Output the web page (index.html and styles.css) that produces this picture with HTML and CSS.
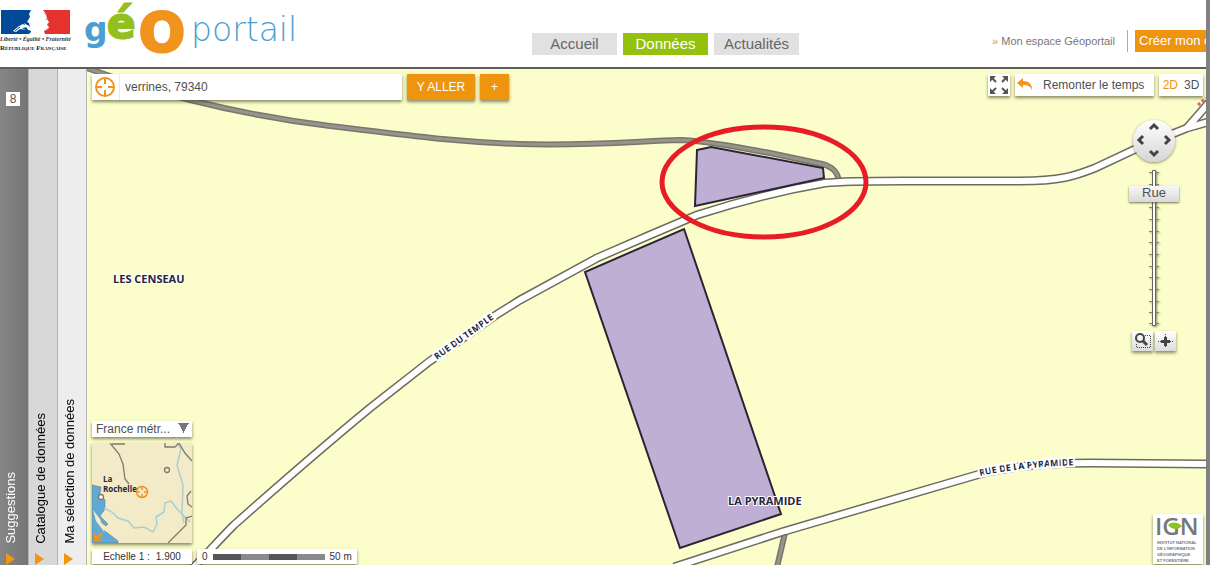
FILE: index.html
```html
<!DOCTYPE html>
<html lang="fr">
<head>
    <meta charset="UTF-8">
    <meta name="viewport" content="width=device-width, initial-scale=1.0">
    <title>Géoportail</title>
    <link rel="stylesheet" href="styles.css">
</head>
<body>
    <header class="header">
        <svg class="logo-rf" width="74" height="54" viewBox="0 0 74 54" role="img" aria-label="République Française">
            <path fill="#004a96" d="M1 10h30l-2 4 1 3-3 5 2 1 1 5 1 4-2 2H1z"/>
            <path fill="#e6322f" d="M43 10h27v24H45l-1-3 4-2 1-2-2-2 2-3-2-3-1-5z"/>
            <path fill="#fff" d="M13 31l6-5 4-2 5 3-6 1 4 2-6-1-4 3zM24 23l5 3 3 5-4-1z"/>
            <path fill="none" stroke="#004a96" d="M15 31l5-4M19 32l5-2"/>
            <path fill="none" stroke="#888" stroke-width="0.6" d="M44 13l2 2M45 19l2 1M47 24h2M46 29h2"/>
            <text class="rf-motto" x="0" y="41">Liberté • Égalité • Fraternité</text>
            <text class="rf-name" x="0" y="50">R<tspan class="rf-small">ÉPUBLIQUE</tspan> F<tspan class="rf-small">RANÇAISE</tspan></text>
        </svg>
        <svg class="logo-geo" width="218" height="66" viewBox="84 0 218 66" role="img" aria-label="Géoportail">
            <text class="geo-g" x="84" y="41">g</text>
            <text class="geo-e" x="107" y="38">é</text>
            <text class="geo-o" x="139" y="51">O</text>
            <text class="geo-portail" x="191" y="41">portail</text>
        </svg>
        <nav class="nav">
            <a href="#">Accueil</a>
            <a href="#" class="active">Données</a>
            <a href="#">Actualités</a>
        </nav>
        <div class="account">
            <a href="#" class="my-space"><span>»</span> Mon espace Géoportail</a>
            <a href="#" class="create">Créer mon espace</a>
        </div>
    </header>

    <main class="main">
        <div class="tabs">
            <button type="button" class="tab tab-dark">
                <span class="badge">8</span>
                <span class="tab-label">Suggestions</span>
                <svg width="9" height="12" viewBox="0 0 9 12"><path fill="#f0960f" d="M0 0l9 6-9 6z"/></svg>
            </button>
            <button type="button" class="tab tab-mid">
                <span class="tab-label">Catalogue de données</span>
                <svg width="9" height="12" viewBox="0 0 9 12"><path fill="#f0960f" d="M0 0l9 6-9 6z"/></svg>
            </button>
            <button type="button" class="tab tab-light">
                <span class="tab-label">Ma sélection de données</span>
                <svg width="9" height="12" viewBox="0 0 9 12"><path fill="#f0960f" d="M0 0l9 6-9 6z"/></svg>
            </button>
        </div>

        <div class="map">
            <svg class="map-canvas" viewBox="87 69 1119 496" preserveAspectRatio="xMidYMid slice">
                <defs>
                    <path id="track" d="M84 67L110 76C140 87 170 95 190 100C230 110 280 120 330 126C400 134 450 142 520 144C590 146 640 141 680 140C710 141 740 148 770 153L822 164C834 167 838 173 839 182"/>
                    <path id="track-south" d="M785 533L777 567"/>
                    <path id="temple" d="M190 571C208 553 216 543 234 525C270 493 330 441 370 408L430 361L496 315L520 300L597 258L650 235L697 215C740 201 790 189 825 183C850 180 900 181 950 181H1020C1060 181 1075 176 1095 168L1140 147L1187 128L1212 121"/>
                    <path id="branch" d="M1187 128L1213 98"/>
                    <path id="pyramide" d="M674 567L785 531L980 474C1015 465 1050 463 1090 463L1210 464"/>
                    <path id="temple-label" d="M437 360L520 300"/>
                    <path id="pyramide-label" d="M980 476Q1030 465 1100 465"/>
                </defs>
                <!-- petits chemins -->
                <g class="track-edge"><use href="#track"/><use href="#track-south"/></g>
                <g class="track-fill"><use href="#track"/><use href="#track-south"/></g>
                <!-- routes -->
                <g class="road-edge"><use href="#temple"/><use href="#branch"/><use href="#pyramide"/></g>
                <g class="road-fill"><use href="#temple"/><use href="#branch"/><use href="#pyramide"/></g>
                <path fill="none" stroke="#e0685a" stroke-width="3" stroke-dasharray="3 2" d="M1198 105l8-7"/>
                <!-- parcelles -->
                <path class="parcel" d="M684 229L781 514L680 548L585 272Z"/>
                <path class="parcel" d="M697 150L711 147L823 168L824 178L695 206Z"/>

                <text class="place" x="113" y="283">LES CENSEAU</text>
                <text class="place" x="728" y="505">LA PYRAMIDE</text>
                <text class="street"><textPath href="#temple-label">RUE DU TEMPLE</textPath></text>
                <text class="street"><textPath href="#pyramide-label">RUE DE LA PYRAMIDE</textPath></text>

                <ellipse class="highlight" cx="764" cy="182" rx="102" ry="55"/>
            </svg>

            <form class="search">
                <label class="search-box">
                    <svg width="27" height="26" viewBox="0 0 27 26" fill="none" stroke="#f0941e" stroke-width="2" aria-label="Lieu">
                        <circle cx="13" cy="13" r="9"/>
                        <path d="M13 4v6M13 16v6M4 13h6M16 13h6"/>
                    </svg>
                    <input type="text" value="verrines, 79340">
                </label>
                <button type="submit" class="go">Y ALLER</button>
                <button type="button" class="more">+</button>
            </form>

            <div class="view-tools">
                <button type="button" class="full" aria-label="Plein écran">
                    <svg width="22" height="22" viewBox="0 0 22 22" fill="#555" stroke="#555" stroke-width="2">
                        <path stroke="none" d="M2 2h6l-6 6zM20 2v6l-6-6zM2 20v-6l6 6zM20 20h-6l6-6z"/>
                        <path d="M4 4l4 4M18 4l-4 4M4 18l4-4M18 18l-4-4"/>
                    </svg>
                </button>
                <button type="button" class="time">
                    <svg width="16" height="14" viewBox="0 0 16 14"><path fill="#f0941e" d="M0 5l6-5v3c6 0 9 3 9 9-2-4-4-5-9-5v3z"/></svg>
                    Remonter le temps
                </button>
                <div class="dims">
                    <button type="button" class="on">2D</button>
                    <button type="button">3D</button>
                </div>
            </div>

            <div class="zoom-tools">
                <button type="button" class="pan" aria-label="Déplacer la carte">
                    <svg width="42" height="42" viewBox="0 0 42 42" fill="none" stroke="#444" stroke-width="3">
                        <path d="M17 9l4-4 4 4M17 31l4 4 4-4M10 16l-4 4 4 4M32 16l4 4-4 4"/>
                    </svg>
                </button>
                <div class="zoom">
                    <svg class="ruler" width="18" height="156" viewBox="0 0 18 156">
                        <path stroke="#85856f" d="M4 2.500h10M4 14.500h10M4 26.500h10M4 37.500h10M4 49.500h10M4 61.500h10M4 72.500h10M4 84.500h10M4 96.500h10M4 107.500h10M4 119.500h10M4 131.500h10M4 142.500h10M4 153.500h10"/>
                        <path fill="#fff" stroke="#666658" d="M7.500.5h3v155h-3z"/>
                    </svg>
                    <input type="range" id="niveau" min="0" max="18" value="16" aria-label="Niveau de zoom">
                    <output class="level" for="niveau">Rue</output>
                </div>
                <div class="zoom-buttons">
                    <button type="button" aria-label="Zoom sur une zone">
                        <svg width="21" height="20" viewBox="0 0 21 20" fill="none" stroke="#444">
                            <path stroke-dasharray="1 1" d="M11 4.500h7.500v12h-14V13"/>
                            <circle cx="8" cy="7" r="4" stroke-width="2"/>
                            <path stroke-width="3" d="M11 10l4 4"/>
                        </svg>
                    </button>
                    <button type="button" aria-label="Centrer">
                        <svg width="21" height="20" viewBox="0 0 21 20" fill="none" stroke="#444">
                            <path stroke-dasharray="1 1" d="M10.500 3v14M3 10.500h15"/>
                            <path fill="#444" stroke="none" d="M9 6h3v3h3v3h-3v3H9v-3H6V9h3z"/>
                        </svg>
                    </button>
                </div>
            </div>

            <div class="overview">
                <select aria-label="Territoire">
                    <option>France métr...</option>
                </select>
                <svg class="mini" viewBox="0 0 100 100">
                    <path fill="#5fa9d6" stroke="#777" stroke-width="0.6" d="M0 42l9 2-1 7 5 6 0 9-5 7 8 8-2 2-8-6 3 8 17 13v2H0z"/>
                    <path fill="#f3eac8" d="M1 67l7 9 5 14-9-12z"/>
                    <g fill="none" stroke="#a9cfd0" stroke-width="1.500">
                        <path d="M12 65l8 4 6 6 10 3 6 7 10-1 9 5 4-8-1-7 8-5 1-9 6-2 6 8 7 7 6 6"/>
                        <path d="M85 0l4 6-4 16 6 20-1 28 2 10"/>
                    </g>
                    <g fill="none" stroke="#807a68" stroke-width="1.300">
                        <path d="M18 0l9 11 4 10 2 15 4 5M20 1h13M73 0v4h10l4-4 6 10 7 8M99 48l-4 5 1 8 4 3M100 73l-6 2 0 7-10 10-8 8"/>
                        <circle cx="75" cy="27" r="2.500"/>
                        <circle cx="9" cy="54" r="2.500" fill="#fff"/>
                    </g>
                    <text class="mini-label" x="11" y="39">La</text>
                    <text class="mini-label" x="11" y="49">Rochelle</text>
                    <g fill="none" stroke="#f0941e" stroke-width="1.500">
                        <circle cx="50" cy="49" r="5.500"/>
                        <path d="M50 43v4M50 51v4M44 49h4M52 49h4"/>
                    </g>
                    <path fill="#f0941e" d="M2 90v8h8l-3-3 4-4-2-2-4 4z"/>
                </svg>
            </div>

            <div class="scales">
                <div class="scale-text"><span>Echelle 1 :</span><span>1.900</span></div>
                <div class="scale-bar">
                    <span>0</span>
                    <div class="bar"><i></i><i></i><i></i><i></i></div>
                    <span>50 m</span>
                </div>
            </div>

            <svg class="ign" width="50" height="50" viewBox="0 0 50 50" role="img" aria-label="IGN">
                <text class="ign-name" x="2" y="21">IGN</text>
                <path fill="#8dc21f" d="M15 11c4-4 10-3 14 1-4 4-10 4-14-1z"/>
                <text class="ign-sub" x="4" y="30">INSTITUT NATIONAL</text>
                <text class="ign-sub" x="4" y="36">DE L'INFORMATION</text>
                <text class="ign-sub" x="4" y="42">GÉOGRAPHIQUE</text>
                <text class="ign-sub" x="4" y="48">ET FORESTIÈRE</text>
            </svg>
        </div>
    </main>
</body>
</html>
```
FILE: styles.css
```css
* {
    box-sizing: border-box;
}
body {
    margin: 0;
    height: 100vh;
    display: flex;
    flex-direction: column;
    border-right: 4px solid #808080;
    font-family: "Liberation Sans", Arial, sans-serif;
    font-size: 12px;
    color: #505050;
    background: #fff;
    overflow: hidden;
}
button, input, select {
    font: inherit;
    color: inherit;
    border: none;
    border-radius: 0;
    padding: 0;
    margin: 0;
}
button {
    cursor: pointer;
}
svg {
    display: block;
}

/* En-tête */
.header {
    display: flex;
    flex: none;
    height: 69px;
    border-bottom: 2px solid #5e5e56;
    overflow: hidden;
}
.logo-rf,
.logo-geo {
    flex: none;
}
.logo-geo {
    margin-left: 10px;
}
.rf-motto {
    font: italic bold 6px "Liberation Serif", serif;
    fill: #333;
}
.rf-name {
    font: bold 7px "Liberation Serif", serif;
    fill: #222;
}
.rf-small {
    font-size: 5px;
}
.geo-g {
    font: bold 33px "DejaVu Sans", sans-serif;
    fill: #4a9fd0;
}
.geo-e {
    font: bold 42px "DejaVu Sans", sans-serif;
    fill: #93c01f;
    stroke: #93c01f;
    stroke-width: 2px;
}
.geo-o {
    font: bold 54px "DejaVu Sans", sans-serif;
    fill: #f0941e;
    stroke: #f0941e;
    stroke-width: 3px;
}
.geo-portail {
    font: 200 33px "DejaVu Sans", "DejaVu Sans Light", sans-serif;
    fill: #4a9fd0;
}
.nav {
    display: flex;
    gap: 6px;
    margin: 33px 0 0 230px;
    height: 22px;
}
.nav a {
    width: 85px;
    line-height: 22px;
    font-size: 15px;
    text-align: center;
    text-decoration: none;
    color: #666;
    background: #e1e1e1;
}
.nav a.active {
    color: #fff;
    background: #93c10e;
}
.account {
    display: flex;
    margin: 30px 0 0 auto;
    height: 22px;
    line-height: 22px;
    white-space: nowrap;
}
.account a {
    text-decoration: none;
}
.my-space {
    padding-right: 12px;
    margin-right: 7px;
    border-right: 1px solid #aaa;
    font-size: 11px;
    color: #777;
}
.my-space span {
    color: #c9a227;
}
.create {
    width: 71px;
    padding-left: 4px;
    overflow: hidden;
    font-size: 13px;
    color: #fff;
    background: #ef940f;
}

/* Onglets verticaux */
.main {
    display: flex;
    flex: 1;
    min-height: 0;
}
.tabs {
    display: flex;
    flex: none;
}
.tab {
    display: flex;
    flex-direction: column;
    align-items: center;
    justify-content: flex-end;
    gap: 9px;
    width: 29px;
    font-size: 13px;
    color: #000;
    border-right: 1px solid #b5b5b5;
}
.tab svg {
    margin-right: 8px;
}
.tab-label {
    writing-mode: vertical-rl;
    transform: rotate(180deg);
    line-height: 18px;
    margin-right: 4px;
}
.tab-dark {
    color: #fff;
    background: linear-gradient(to right, #868686, #757575);
}
.tab-dark .tab-label {
    margin-right: 6px;
}
.tab-mid {
    background: #d8d8d8;
}
.tab-light {
    background: #ededed;
}
.badge {
    width: 14px;
    height: 14px;
    margin: 23px 2px auto 0;
    line-height: 14px;
    font-size: 12px;
    color: #555;
    background: #fff;
}

/* Carte */
.map {
    position: relative;
    flex: 1;
    min-width: 0;
    background: #fbfdca;
    overflow: hidden;
}
.map-canvas {
    width: 100%;
    height: 100%;
}
.track-edge {
    fill: none;
    stroke: #77776c;
    stroke-width: 6px;
}
.track-fill {
    fill: none;
    stroke: #95958b;
    stroke-width: 3px;
}
.road-edge {
    fill: none;
    stroke: #6c6c5e;
    stroke-width: 9px;
}
.road-fill {
    fill: none;
    stroke: #fff;
    stroke-width: 6px;
}
.parcel {
    fill: #c0afd5;
    stroke: #2c2433;
    stroke-width: 2px;
}
.highlight {
    fill: none;
    stroke: #e81c24;
    stroke-width: 5px;
}
.place,
.street {
    font: bold 11px "Open Sans", sans-serif;
    fill: #26263a;
    stroke: #fff;
    stroke-width: 2px;
    paint-order: stroke;
}
.street {
    font-size: 9px;
    stroke-width: 4px;
}
.search,
.view-tools,
.zoom-tools,
.overview,
.scales,
.ign {
    position: absolute;
}
.search-box,
.search button,
.view-tools > *,
.zoom-buttons button,
.overview > *,
.scales > *,
.ign {
    box-shadow: 0 2px 3px rgba(60, 60, 30, 0.6);
}

.search {
    top: 5px;
    left: 5px;
    display: flex;
    gap: 5px;
    height: 26px;
}
.search-box {
    display: flex;
    width: 310px;
    background: #fff;
}
.search-box input {
    flex: 1;
    min-width: 0;
    padding-left: 5px;
    border-left: 1px solid #f3e6d5;
    background: none;
    outline: none;
}
.search button {
    color: #fff;
    background: #ef940f;
}
.search .go {
    width: 68px;
}
.search .more {
    width: 29px;
}

.view-tools {
    top: 5px;
    right: 3px;
    display: flex;
    gap: 5px;
    height: 22px;
}
.view-tools button {
    background: #fff;
}
.time {
    display: flex;
    align-items: center;
    gap: 10px;
    width: 139px;
}
.view-tools .time {
    padding-left: 2px;
}
.dims {
    display: flex;
    justify-content: center;
    gap: 6px;
    width: 44px;
    background: #fff;
}
.dims .on {
    color: #ef940f;
}

.zoom-tools {
    top: 51px;
    right: 27px;
    width: 50px;
    display: flex;
    flex-direction: column;
    align-items: center;
}
.pan {
    width: 42px;
    height: 42px;
    border-radius: 50%;
    background: linear-gradient(#fff, #d5d5d5);
    box-shadow: 0 1px 3px rgba(60, 60, 30, 0.6);
}
.zoom {
    position: relative;
    display: flex;
    justify-content: center;
    width: 50px;
    height: 156px;
    margin: 8px 0 5px;
}
.ruler {
    filter: drop-shadow(1px 1px 1px rgba(60, 60, 30, 0.6));
}
.zoom input {
    position: absolute;
    inset: 0;
    width: 50px;
    height: 156px;
    writing-mode: vertical-lr;
    direction: rtl;
    appearance: none;
    background: none;
}
.zoom input::-webkit-slider-thumb {
    appearance: none;
    width: 50px;
    height: 16px;
    background: linear-gradient(#f8f8f8, #d8d8d8);
    box-shadow: 0 1px 2px rgba(60, 60, 30, 0.7);
}
.level {
    position: absolute;
    top: 15px;
    left: 0;
    right: 0;
    line-height: 16px;
    font-size: 13px;
    text-align: center;
    pointer-events: none;
}
.zoom-buttons {
    display: flex;
    gap: 2px;
}
.zoom-buttons button {
    background: linear-gradient(#fff, #dcdcdc);
}

.overview {
    left: 5px;
    bottom: 22px;
    width: 100px;
    display: flex;
    flex-direction: column;
    gap: 6px;
}
.overview select {
    height: 16px;
    padding-left: 4px;
    appearance: none;
    background:
        conic-gradient(from -28deg at 50% 100%, #777 56deg, transparent 0) right 3px top 2px / 11px 10px no-repeat,
        #fff;
}
.mini {
    background: #f3eac8;
}
.mini-label {
    font: bold 8px "Open Sans", sans-serif;
    fill: #26263a;
}

.scales {
    left: 5px;
    bottom: 1px;
    display: flex;
    gap: 5px;
    height: 15px;
    line-height: 15px;
    font-size: 10px;
    color: #333;
}
.scales > * {
    display: flex;
    background: #fff;
}
.scale-text {
    width: 100px;
    justify-content: center;
    gap: 6px;
}
.scale-bar {
    align-items: center;
    gap: 5px;
    padding: 0 5px;
}
.bar {
    display: flex;
    height: 6px;
}
.bar i {
    width: 28px;
    background: #555;
}
.bar i:nth-child(even) {
    background: #8a8a8a;
}

.ign {
    right: 3px;
    bottom: 1px;
    background: #fff;
}
.ign-name {
    font: 600 24px "Open Sans", sans-serif;
    fill: #777;
}
.ign-sub {
    font: bold 4px "Liberation Sans", sans-serif;
    fill: #777;
}
```
